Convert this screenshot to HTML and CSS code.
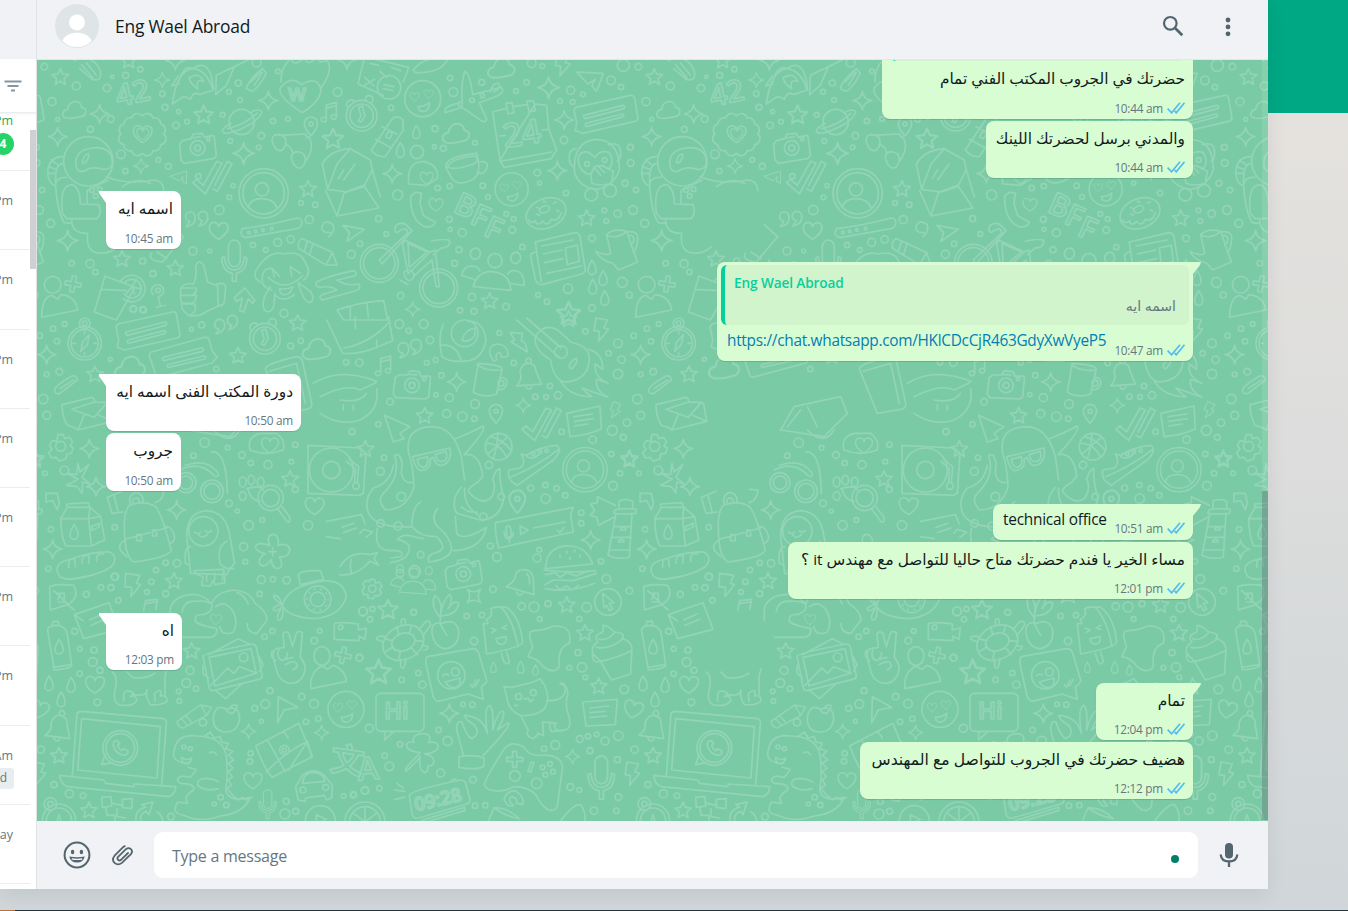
FILE: index.html
```
<!DOCTYPE html>
<html lang="en">
<head>
    <meta charset="UTF-8">
    <meta name="viewport" content="width=device-width, initial-scale=1.0">
    <title>WhatsApp</title>
    <link rel="stylesheet" href="styles.css">
</head>
<body>
    <!-- shared icons -->
    <svg class="defs" width="0" height="0">
        <symbol id="ticks" viewBox="0 0 18 12"><path d="M.6 6.600l4 4.200L13 .8M7.600 9l1.600 1.800L17.500.8" fill="none" stroke="#53bdeb" stroke-width="1.700"/></symbol>
    </svg>
    <div class="app">
        <aside class="side">
            <div class="side-head"></div>
            <div class="side-search">
                <svg width="18" height="12" viewBox="0 0 18 12"><path d="M.5 1.5h17M3.5 6h11M7 10.5h4" stroke="#8696a0" stroke-width="1.9"/></svg>
            </div>
            <ul class="list">
                <li class="unread"><span>Pm</span><b>4</b></li>
                <li><span>Pm</span></li>
                <li><span>Pm</span></li>
                <li><span>Pm</span></li>
                <li><span>Pm</span></li>
                <li><span>Pm</span></li>
                <li><span>Pm</span></li>
                <li><span>Pm</span></li>
                <li><span>Am</span><i>d</i></li>
                <li><span>ay</span></li>
            </ul>
            <div class="side-thumb"></div>
        </aside>
        <main class="chat">
            <header class="chat-head">
                <svg width="44" height="44" viewBox="0 0 44 44">
                    <circle cx="22" cy="22" r="22" fill="#dfe5e7"/>
                    <circle cx="22" cy="18.4" r="8" fill="#fff"/>
                    <path d="M7.4 36.5C10 31 16 28.700 22 28.700s12 2.300 14.600 7.800C33 41 27.500 43 22 43S11 41 7.400 36.500z" fill="#fff"/>
                </svg>
                <h1>Eng Wael Abroad</h1>
                <svg class="find" width="22" height="22" viewBox="0 0 22 22"><circle cx="8.300" cy="8.300" r="6.300" fill="none" stroke="#54656f" stroke-width="2.200"/><path d="M13 13l7.300 7.300" stroke="#54656f" stroke-width="2.700"/></svg>
                <svg class="more" width="6" height="20" viewBox="0 0 6 20"><g fill="#54656f"><circle cx="3" cy="3" r="2.400"/><circle cx="3" cy="9.900" r="2.400"/><circle cx="3" cy="16.800" r="2.400"/></g></svg>
            </header>
            <section class="messages">
                <svg class="wallpaper" width="1231" height="761">
                    <defs>
                        <path id="star" d="M0-26L7-10 25-8 11 4 15 21 0 12-15 21-11 4-25-8-7-10z"/>
                        <path id="spark" d="M0-28Q3-5 28 0Q3 5 0 28Q-3 5-28 0Q-3-5 0-28z"/>
                        <path id="heart" d="M0 26C-42 2-30-30-10-24Q-2-22 0-12Q4-24 14-24C36-22 34 4 0 26z"/>
                        <path id="drop" d="M0-22Q14-2 12 10A12 12 0 0 1-12 10Q-12-2 0-22z"/>
                        <path id="cloud" d="M-26 26C-42 18-34 2-20 0C-16-30 20-30 22-6C42-4 36 22 18 22Q-8 30-26 26z"/>
                        <path id="bolt" d="M-16-34L18-28 8-4 22 0-8 36-6 6-22 4z"/>
                        <path id="plane" d="M-40-30L40-26 20 28 6 12 16-8-6 6z"/>
                        <path id="pin" d="M0 28Q-20 4-20-8A20 20 0 0 1 20-10Q18 8 0 28zM-6-8a6 6 0 1 0 12 0a6 6 0 1 0-12 0"/>
                        <path id="tick" d="M-58 16l12-10 20 18 40-72 16 6-50 92zM2 34l14 8 44-82-14-8-38 72"/>
                        <path id="note" d="M-12 24V-20L18-28V16M-12-10L18-18M-12 24a8 7 0 1 1-4-6M18 16a8 7 0 1 1-4-6"/>
                        <path id="plus" d="M-6-24H6V-6H24V6H6V24H-6V6H-24V-6H-6z"/>
                        <path id="mic" d="M-18-30a18 20 0 0 1 36 0V10a18 20 0 0 1-36 0zM-38 4l8-4q4 40 30 40t30-40l8 4q-2 40-32 46v24h-12v-24q-30-6-32-46z"/>
                        <path id="bell" d="M-40 24Q-16 6-22-12Q-14-38 6-36Q30-30 26-8L34 34zM-14 32q8 16 18 4M4-38a8 8 0 1 1 12 2"/>
                        <path id="pencil" d="M-62-8L38 4 62 36 30 46-62 24Q-74 6-62-8zM-44-6V28M-26-4V32M38 4L30 46"/>
                        <path id="glasses" d="M-60-20q0-20 22-18t20 26q-6 24-20 22t-22-30zM-2 32q0-20 22-18t20 26q-6 24-20 22t-22-30zM-20-10Q2 0 2 20M-38-36L40-40 46-28M42 40Q70 0 50-32"/>
                        <g id="user"><circle r="74"/><circle r="62"/><circle cx="-5" cy="-12" r="20"/><path d="M-46 42Q-40 16-6 16T40 42"/></g>
                        <g id="camera"><path d="M-46-22L-20-28-14-42 14-44 20-32 44-38Q50-38 50-30L56 22Q54 30 46 32L-40 46-50 36-54-12z"/><circle r="22"/><circle r="9"/><path d="M-16-30l24-4"/><circle cx="32" cy="-26" r="5"/></g>
                        <g id="clock"><circle r="46"/><circle r="35"/><path d="M-10-26l8 26-8 16 8 4 12-20-8-28zM-42-26q-8-10 2-18t20 2M12-46q-2-16 12-14t8 20"/></g>
                        <g id="smile"><circle r="54"/><use href="#heart" transform="translate(-24 -6) scale(.5)"/><use href="#heart" transform="translate(18 -14) scale(.5)"/><path d="M-14 24q20 0 34-12q0 24-16 26t-18-14z"/></g>
                        <g id="sheet"><path d="M-86-28L78-64Q88-66 90-54L100 4Q100 12 90 14L-66 50-88 42-84 18-92-20z"/><path d="M-62-4L54-34q10 2 4 10L-58 6q-8-4-4-10zM-56 20L52-8q8 2 4 8L-54 30q-8-4-2-10z"/></g>
                        <g id="people"><circle cy="-46" r="20"/><path d="M-54 34Q-46-14 0-14T54 34zM-58-44a14 16 0 1 1 .1 0M58-44a14 16 0 1 1 .1 0M-54 14L-90 6Q-88-24-60-24Q-46-24-40-12M54 14L90 16Q88-22 60-24Q46-24 40-12" /></g>
                        <g id="mail"><path d="M-76-26L14-48Q22-46 22-34L62-32Q68-30 68-22L76 24-28 50-36 44-60 36Q-76 10-76-26zM-46-12L20 12 60-32M-46-12L22-34M-28 50L-10 6M76 24L34 6"/></g>
                        <g id="compass"><circle r="50"/><circle r="41"/><circle cy="-60" r="16"/><circle cy="-60" r="7"/><path d="M14-26L-6-4-12 24 8 4zM0-36v8M0 28v8M-36 0h8M28 0h8"/></g>
                        <g id="doodle" fill="none" stroke="#93d4b6" stroke-width="5" stroke-linejoin="round" stroke-linecap="round">
                            <g transform="scale(.3333)">
                                <use href="#star" x="70" y="52"/><use href="#star" x="275" y="2"/><use href="#star" transform="translate(500 166) scale(1.15)"/><use href="#star" transform="translate(888 238) scale(1.25)"/><use href="#star" x="813" y="388"/><use href="#star" x="255" y="598"/><use href="#star" x="415" y="626"/>
                                <use href="#spark" transform="translate(376 60) scale(.8)"/><use href="#spark" x="188" y="162"/><use href="#spark" x="415" y="2"/><use href="#spark" x="694" y="122"/><use href="#spark" x="62" y="230"/><use href="#spark" transform="translate(312 318) scale(.8)"/><use href="#spark" transform="translate(620 280) scale(1.15)"/><use href="#spark" transform="translate(92 542) scale(1.1)"/><use href="#spark" x="930" y="0"/>
                                <text x="243" y="140" font-size="90" transform="rotate(-12 243 140)">42</text>
                                <path d="M112 2Q170-20 190 34Q196 66 166 58L128 26M134 14l34 40M148 8l30 38"/>
                                <path d="M406 132Q420 30 468 26Q510 30 528 90Q500 100 488 104Q470 92 460 118Q440 104 430 116zM468 26Q440 10 424 68M468 26Q520-10 530 88M456 54q30-20 44 10-26-8-18 22-20-12-26-32M426 72l-22 6 20-30M536 104L538 46 592 20 568 76zM592 20l70-34"/>
                                <path d="M628 86Q634 60 676 26L688 40Q668 80 646 94zM642 66l30-30M652 76l24-38"/>
                                <path d="M732 66Q730 20 764-6Q766 26 806-10Q804 26 846-12Q842 16 870 0Q892 30 850 86M796 158Q720 110 730 84Q760 44 794 74Q840 46 852 88Q850 124 796 158z"/>
                                <text x="754" y="122" font-size="56">W</text>
                                <use href="#cloud" x="112" y="148"/>
                                <path transform="translate(316 222)" d="M64 0A18 18 0 0 1 55 32A18 18 0 0 1 32 50A18 18 0 0 1 0 58A18 18 0 0 1-32 50A18 18 0 0 1-55 32A18 18 0 0 1-64 0A18 18 0 0 1-55-30A18 18 0 0 1-32-48A18 18 0 0 1 0-54A18 18 0 0 1 32-48A18 18 0 0 1 55-30A18 18 0 0 1 64 0z"/>
                                <use href="#heart" x="317" y="222"/><use href="#heart" transform="translate(317 222) scale(.65)"/>
                                <use href="#camera" x="482" y="264"/>
                                <circle cx="614" cy="186" r="38"/><path d="M582 190Q540 214 566 220Q590 220 648 188Q690 152 664 150Q648 150 640 160M572 206Q620 196 660 160"/>
                                <use href="#plane" transform="translate(430 358) rotate(-20) scale(.65)"/>
                                <use href="#tick" x="525" y="352"/>
                                <use href="#user" x="680" y="400"/>
                                <use href="#glasses" x="765" y="262"/>
                                <use href="#pin" x="822" y="200"/><use href="#note" x="880" y="155"/><use href="#clock" x="974" y="167"/>
                                <!-- open letter -->
                                <path d="M872 388L900 312 940 266 1000 300 1006 330 980 380 930 396zM872 388L856 312Q880 270 940 266M900 468L866 392M900 468L922 398 980 376 1026 444zM1006 330L1030 410M904 356l16-26M920 360l34-48"/>
                                <!-- astronaut -->
                                <circle cx="154" cy="304" r="74"/><path d="M118 322Q110 280 148 268Q200 252 222 284Q236 330 200 328Q160 318 146 332Q124 340 118 322zM136 306Q140 284 154 282Q160 284 148 304Q138 314 136 306M78 290Q34 290 32 340Q34 370 56 378M78 310Q52 312 56 376M34 320l22 8M34 340h20M44 300l18 14M90 352Q54 350 56 380Q62 460 82 488L104 490M76 460Q66 372 108 374Q130 386 130 432L186 434Q196 460 180 476H90zM104 480Q104 520 152 520Q146 570 178 578Q220 584 240 560M208 350Q270 376 350 360Q380 362 380 392M214 360L150 392V430"/>
                                <circle cx="165" cy="390" r="7"/><circle cx="188" cy="388" r="7"/><circle cx="176" cy="408" r="7"/>
                                <path d="M343 580Q330 600 376 606L440 530 400 494M360 576l30 20M256 380Q300 350 340 370"/>
                                <path d="M616 506Q700 496 780 474Q796 474 794 490Q794 502 780 506L632 532Q614 534 612 518zM448 500q30-6 26-30a14 14 0 1 0-16 14zM486 498q30-6 26-30a14 14 0 1 0-16 14z"/>
                                <circle cx="636" cy="518" r="4"/><circle cx="656" cy="514" r="4"/><circle cx="678" cy="510" r="4"/><circle cx="704" cy="506" r="4"/>
                                <use href="#heart" x="545" y="512"/>
                                <path d="M880 518Q850 520 856 496Q868 476 888 494Q896 514 876 530M918 496L982 508 930 544 938 518z"/>
                                <use href="#pencil" transform="translate(852 562) rotate(18)"/>
                                <use href="#mic" x="592" y="590"/>
                                <path d="M432 684Q440 668 470 672Q480 650 476 620Q484 594 500 616L512 666 542 678 544 738 506 756Q486 772 454 766L436 748 430 708zM436 684h42q0 22-20 22h-24M434 706h44q0 24-22 24h-18M442 732h32q6 26-16 34M540 672q24-6 26 10l-4 44q-4 14-20 10"/>
                                <path d="M670 666Q640 650 666 618Q700 570 740 582Q790 570 804 606Q826 640 800 660M676 652Q680 620 706 626L712 650M706 626L728 650M760 620L764 648M760 620L790 640M694 652Q744 700 796 648M728 686Q748 690 768 680Q760 704 744 704T728 686zM700 680Q670 720 682 750Q700 764 710 740L714 700M784 668Q800 730 820 728Q836 718 820 694zM716 706Q740 730 772 704M676 652Q670 680 704 690"/>
                                <path d="M204 648L294 682 238 780 172 756zM192 688L268 692M252 662A40 40 0 1 1 258 716M262 670A28 28 0 1 1 262 702M284 680l14-22M284 680l24 6M284 680l10 22M284 680l-14 20"/>
                                <circle cx="47" cy="674" r="25"/><path d="M14 772Q14 712 44 706L62 718 72 704Q116 708 122 750zM348 704a18 18 0 1 1 16 6l6 28M358 742l26-6M592 714L624 684 654 722 646 730 634 716 620 756 608 752 616 714 598 724z"/>
                                <circle cx="363" cy="691" r="7"/><use href="#plus" transform="translate(108 672) rotate(10)"/>
                                <path d="M838 666Q880 646 950 632Q964 640 952 648L900 660Q930 680 966 672Q974 690 950 694L856 720Q842 712 856 704L900 690Q880 676 850 682Q834 680 838 666zM900 750Q960 728 1040 722L1052 780H920zM940 740v40M990 732l4 40"/>
                                <circle cx="22" cy="20" r="10"/><circle cx="118" cy="78" r="12"/><circle cx="45" cy="125" r="12"/><circle cx="210" cy="84" r="11"/><circle cx="266" cy="46" r="9"/><circle cx="226" cy="50" r="5"/><circle cx="310" cy="28" r="8"/><circle cx="376" cy="101" r="8"/><circle cx="384" cy="142" r="9"/><circle cx="425" cy="155" r="6"/><circle cx="417" cy="196" r="10"/><circle cx="450" cy="185" r="7"/><circle cx="160" cy="208" r="9"/><circle cx="221" cy="177" r="10"/><circle cx="62" cy="178" r="6"/><circle cx="557" cy="164" r="7"/><circle cx="604" cy="69" r="9"/><circle cx="576" cy="95" r="7"/><circle cx="609" cy="120" r="7"/><circle cx="659" cy="8" r="13"/><circle cx="723" cy="34" r="7"/><circle cx="902" cy="96" r="13"/><circle cx="708" cy="183" r="8"/><circle cx="753" cy="177" r="7"/><circle cx="673" cy="227" r="10"/><circle cx="665" cy="262" r="7"/><circle cx="580" cy="243" r="7"/><circle cx="252" cy="283" r="13"/><circle cx="394" cy="319" r="9"/><circle cx="364" cy="300" r="7"/><circle cx="484" cy="349" r="8"/><circle cx="588" cy="377" r="6"/><circle cx="547" cy="450" r="14"/><circle cx="577" cy="412" r="7"/><circle cx="468" cy="573" r="12"/><circle cx="518" cy="573" r="6"/><circle cx="817" cy="479" r="12"/><circle cx="835" cy="434" r="8"/><circle cx="792" cy="429" r="7"/><circle cx="722" cy="547" r="12"/><circle cx="761" cy="538" r="11"/><circle cx="686" cy="570" r="7"/><circle cx="648" cy="555" r="8"/><circle cx="41" cy="490" r="12"/><circle cx="159" cy="611" r="12"/><circle cx="104" cy="610" r="8"/><circle cx="317" cy="603" r="9"/><circle cx="348" cy="641" r="9"/><circle cx="175" cy="636" r="8"/><circle cx="289" cy="747" r="10"/><circle cx="317" cy="749" r="9"/><circle cx="15" cy="390" r="8"/><circle cx="6" cy="450" r="13"/><circle cx="265" cy="333" r="8"/>
                            </g>
                            <g transform="translate(303 0) scale(.3333)">
                                <path d="M74-10L54 72 130 106M74-10L206 22 190 66M154 22l28 10"/><circle cx="147" cy="82" r="35"/><path d="M132 74l30 6M130 86l28 6M74 52l28 26M74 76l30-18M90 10l26 6M120 34l20 18M220 30Q250-10 326-10Q310 40 226 38z"/>
                                <use href="#smile" x="248" y="116"/><use href="#smile" transform="translate(515 388) scale(.92)"/>
                                <path d="M374 34Q390 40 398 104L484 82Q496 94 476 106L418 128 440 178Q436 190 424 182L366 142 316 158Q310 142 340 134L366 126Q364 60 374 34zM452 96q4-28 24-26 6 16-14 26"/>
                                <circle cx="396" cy="121" r="7"/><circle cx="427" cy="107" r="6"/><circle cx="361" cy="132" r="6"/>
                                <use href="#cloud" transform="translate(348 218) scale(1.15)"/><use href="#cloud" transform="translate(484 22) scale(1.15)"/>
                                <path d="M458 156L496 146M520 140L560 134M586 132L620 136 626 206 650 270 634 296 492 322 480 300zM480 304L636 276M478 228L496 226M606 210L622 208M498 130l18-2 6 30-18 4zM560 124l20-2 6 30-18 4zM458 156L480 300"/>
                                <text x="494" y="264" font-size="100" transform="rotate(-9 494 264)">24</text>
                                <path d="M94 270L150 186Q164 160 188 178L190 210 136 290Q110 292 94 270zM106 238l44 24M126 200l44 22M138 232q4-20 14-16t-4 20z"/>
                                <circle cx="231" cy="276" r="20"/><path d="M206 372Q200 304 252 304Q298 316 292 356L260 376z"/><use href="#heart" transform="translate(260 354) scale(.7)"/>
                                <path d="M318 324Q310 290 410 280Q430 350 390 362Q350 380 334 352zM322 322Q330 296 404 288Q426 304 390 316Q350 330 322 322M418 306Q444 300 442 322Q434 346 412 338"/>
                                <path d="M228 396L244 400 240 430 250 466 266 476 286 486Q280 504 254 500Q210 480 212 408z"/><use href="#heart" transform="translate(288 434) scale(.75)"/>
                                <g font-size="92"><text x="336" y="454" transform="rotate(24 336 454)">B</text><text x="386" y="488" transform="rotate(24 386 488)">F</text><text x="426" y="524" transform="rotate(24 426 524)">F</text></g>
                                <ellipse cx="618" cy="460" rx="62" ry="44" transform="rotate(-22 618 460)"/><ellipse cx="614" cy="448" rx="16" ry="10" transform="rotate(-22 614 448)"/><path d="M566 480q8 14 20 2 6 20 22 2 14 18 26-6 20 10 30-20M590 442l8 4M640 430l8-4M610 424l8 2M650 450l6 4M590 462l8 4"/>
                                <!-- monkey -->
                                <path d="M704 340Q696 244 768 238Q840 240 838 330Q820 380 770 388Q720 384 704 340zM708 266Q684 270 688 300Q690 316 702 320M806 254Q840 244 842 276Q842 300 832 304M716 310Q710 272 744 276L766 292Q780 268 808 278Q826 308 806 328L790 318M752 344L764 320Q784 310 820 334L814 370Q780 380 756 370zM766 326l16 20M776 320l18 18M716 310Q724 340 752 344"/>
                                <circle cx="741" cy="312" r="7"/><circle cx="794" cy="300" r="7"/><circle cx="754" cy="404" r="19"/><circle cx="810" cy="392" r="19"/>
                                <use href="#sheet" x="794" y="170"/><use href="#bolt" x="668" y="12"/><use href="#plane" x="750" y="66"/>
                                <!-- bicycle -->
                                <circle cx="118" cy="610" r="57"/><circle cx="118" cy="610" r="47"/><circle cx="296" cy="684" r="57"/><circle cx="296" cy="684" r="47"/>
                                <path d="M118 600L204 518Q200 500 180 512Q166 524 164 508Q168 484 196 492L216 512 126 612zM188 552L204 642 270 576 194 540zM204 550L208 622 262 576zM270 576L286 570 298 680H288L276 600 220 650M274 544Q300 536 328 540Q334 562 304 564L280 584M192 636q20-14 28 4t-14 22q-14-8-14-26zM180 660l24 14"/>
                                <use href="#people" transform="translate(460 650) rotate(6) scale(1.05)"/>
                                <path d="M586 546L704 518Q718 518 720 530L736 630Q734 640 724 642L606 674Q590 674 586 656L572 590Q570 578 590 576zM590 576L604 664M606 558l94-18M610 582l56-12M614 608l54-12M620 640l106-22M676 564l36-8 6 48-36 10z"/>
                                <path d="M800 524Q820 504 860 514L892 606 836 630 818 610Q780 600 768 574Q800 590 812 580zM800 526Q830 538 858 516M860 516Q900 510 892 546Q890 570 880 576M868 526Q886 526 880 546L872 556"/>
                                <use href="#spark" transform="translate(157 341)"/><use href="#spark" transform="translate(626 83) scale(1.15)"/><use href="#spark" x="673" y="180"/><use href="#spark" x="652" y="332"/><use href="#spark" transform="translate(218 748) scale(.8)"/>
                                <use href="#star" x="740" y="476"/><use href="#star" x="449" y="724"/><use href="#star" transform="translate(686 762) scale(1.4)"/>
                                <use href="#drop" transform="translate(229 216) scale(.9)"/><use href="#drop" x="181" y="270"/><use href="#drop" x="756" y="622"/><use href="#drop" x="789" y="654"/><use href="#drop" x="758" y="680"/><use href="#drop" x="794" y="714"/>
                                <circle cx="340" cy="96" r="13"/><circle cx="425" cy="67" r="9"/><circle cx="330" cy="54" r="8"/><circle cx="153" cy="143" r="8"/><circle cx="285" cy="206" r="9"/><circle cx="405" cy="248" r="7"/><circle cx="310" cy="265" r="9"/><circle cx="283" cy="260" r="6"/><circle cx="560" cy="67" r="8"/><circle cx="575" cy="9" r="13"/><circle cx="607" cy="18" r="7"/><circle cx="528" cy="93" r="7"/><circle cx="692" cy="91" r="12"/><circle cx="729" cy="103" r="7"/><circle cx="813" cy="61" r="13"/><circle cx="850" cy="16" r="18"/><circle cx="843" cy="81" r="8"/><circle cx="660" cy="123" r="7"/><circle cx="698" cy="126" r="7"/><circle cx="672" cy="240" r="11"/><circle cx="592" cy="338" r="10"/><circle cx="599" cy="369" r="6"/><circle cx="678" cy="399" r="8"/><circle cx="173" cy="405" r="15"/><circle cx="293" cy="384" r="8"/><circle cx="329" cy="378" r="8"/><circle cx="428" cy="377" r="8"/><circle cx="444" cy="411" r="7"/><circle cx="328" cy="478" r="9"/><circle cx="367" cy="518" r="12"/><circle cx="330" cy="508" r="6"/><circle cx="517" cy="510" r="10"/><circle cx="499" cy="462" r="7"/><circle cx="521" cy="477" r="7"/><circle cx="547" cy="561" r="8"/><circle cx="116" cy="476" r="9"/><circle cx="139" cy="522" r="7"/><circle cx="793" cy="451" r="7"/><circle cx="833" cy="461" r="11"/><circle cx="799" cy="483" r="7"/><circle cx="756" cy="535" r="10"/><circle cx="855" cy="370" r="9"/><circle cx="872" cy="309" r="10"/><circle cx="871" cy="262" r="9"/><circle cx="357" cy="569" r="9"/><circle cx="344" cy="610" r="9"/><circle cx="396" cy="711" r="11"/><circle cx="402" cy="754" r="9"/><circle cx="360" cy="751" r="8"/><circle cx="498" cy="740" r="10"/><circle cx="684" cy="686" r="14"/><circle cx="594" cy="705" r="7"/><circle cx="621" cy="725" r="8"/><circle cx="756" cy="744" r="10"/><circle cx="847" cy="667" r="15"/><circle cx="868" cy="705" r="9"/><circle cx="182" cy="707" r="10"/><circle cx="34" cy="583" r="12"/><circle cx="60" cy="551" r="8"/>
                            </g>
                            <g transform="translate(-37 220) scale(.3333)">
                                <use href="#compass" x="254" y="190"/><use href="#sheet" x="440" y="160"/><use href="#sheet" transform="translate(554 236) scale(-1 1) rotate(28)"/>
                                <use href="#clock" x="795" y="176"/><use href="#cloud" transform="translate(390 260) scale(1.3)"/><use href="#cloud" transform="translate(950 205) scale(1.2)"/>
                                <path d="M648 162q28-8 26-28a15 15 0 1 0-16 14zM686 150q28-8 26-28a15 15 0 1 0-16 14zM796 266Q800 250 890 230Q904 230 908 246L936 374Q934 386 920 388L850 400zM808 274L890 250 916 370M164 330Q166 316 216 288Q232 286 232 300L180 340Q164 344 164 330zM180 326L220 300"/>
                                <use href="#mail" x="262" y="400"/>
                                <use href="#star" x="714" y="228"/><use href="#star" x="893" y="130"/><use href="#star" x="285" y="284"/><use href="#star" x="870" y="598"/><use href="#spark" x="140" y="224"/><use href="#spark" x="268" y="506"/><use href="#spark" x="288" y="620"/><use href="#spark" x="530" y="690"/><use href="#spark" x="158" y="808"/><use href="#star" x="106" y="540"/>
                                <circle cx="182" cy="499" r="15"/><path d="M174 464h16l4 12 14-4 10 14-8 12 10 6-6 16-14 2-2 14-20 8-10-12-14 2-8-16 10-10-8-12 8-14 14 2z"/>
                                <path d="M234 550l-4 34-30-4 34 18-34 18 32 4 14 20 2-34 22 6-24-20 20-38-26 22zM138 640l34 0 6 30-6 20-14-28-20 4z"/>
                                <!-- milk carton, bread, backpack -->
                                <path d="M182 716L202 682 200 672 264 668 270 682 302 710 314 780 274 798 198 798Q184 776 182 716zM182 716H266L302 710M266 716L274 798M202 682H268M266 716L270 682M274 740l24-10v10l-22 12z"/><use href="#drop" x="222" y="756"/>
                                <path d="M174 880Q160 850 210 838Q280 814 330 816Q356 832 336 858Q300 886 210 898Q178 898 174 880zM206 862Q204 830 224 838L226 860M246 850Q246 820 268 828L266 850M290 844Q288 816 310 822"/>
                                <path d="M376 790Q366 700 388 676Q430 660 460 676Q480 680 514 812Q500 834 400 846Q380 830 376 790zM376 778L500 744M392 674a20 24 0 1 1 36-4M398 668a10 12 0 1 1 20-4M410 764h14v18h-14zM458 750h12v18h-12zM376 780Q352 790 362 812L380 830M492 740Q516 736 524 770Q524 788 508 790M322 652L366 634M322 652L336 700 370 696M466 628L492 630Q490 660 466 668M342 646l12 48"/>
                                <path d="M540 570Q600 540 644 588M556 556Q620 534 652 576Q660 590 648 590M634 516Q680 510 682 640"/><circle cx="558" cy="608" r="30"/><circle cx="558" cy="608" r="20"/><circle cx="636" cy="634" r="34"/><circle cx="636" cy="634" r="24"/>
                                <path d="M572 880L560 770Q560 696 620 692Q680 696 690 770L704 850 690 866 680 884zM572 800Q552 800 556 850L570 856M680 784Q650 800 660 850Q674 870 700 866M584 756q8 10 18 0M616 752q8 10 18 0M596 764q10 14 26 0M620 884v20M644 880v20M668 880v20"/><circle cx="610" cy="754" r="44"/>
                                <circle cx="812" cy="654" r="38"/><circle cx="812" cy="654" r="26"/><path d="M834 688L860 724Q872 732 870 712L846 680M740 626Q780 614 790 630M744 626Q750 660 780 664"/><ellipse cx="728" cy="606" rx="10" ry="15"/><ellipse cx="754" cy="600" rx="10" ry="14"/><ellipse cx="782" cy="606" rx="10" ry="14"/><ellipse cx="728" cy="648" rx="10" ry="13"/>
                                <path transform="translate(818 815)" d="M-8-18C-30-60 26-66 16-18C60-36 64 20 20 16C44 54-2 66-4 24C-30 66-60 26-22 6C-70-4-54-38-8-18zM0-12V12M-12 0H12"/>
                                <path d="M750 510Q740 470 780 460H830Q858 480 850 510Q800 530 750 510zM640 450Q690 500 720 450"/><use href="#heart" transform="translate(810 496) scale(.9)"/>
                                <path d="M560 450L600 380 740 350 760 400 690 470zM580 440l40-50M640 380l30 60"/>
                                <use href="#heart" x="944" y="678"/>
                                <circle cx="119" cy="167" r="8"/><circle cx="159" cy="146" r="8"/><circle cx="194" cy="132" r="7"/><circle cx="171" cy="184" r="8"/><circle cx="178" cy="275" r="10"/><circle cx="140" cy="283" r="7"/><circle cx="130" cy="357" r="14"/><circle cx="140" cy="406" r="12"/><circle cx="193" cy="571" r="13"/><circle cx="135" cy="580" r="7"/><circle cx="400" cy="87" r="9"/><circle cx="430" cy="90" r="9"/><circle cx="605" cy="135" r="9"/><circle cx="574" cy="148" r="6"/><circle cx="331" cy="238" r="6"/><circle cx="649" cy="267" r="8"/><circle cx="872" cy="198" r="9"/><circle cx="902" cy="182" r="8"/><circle cx="852" cy="100" r="12"/><circle cx="614" cy="488" r="14"/><circle cx="580" cy="527" r="8"/><circle cx="683" cy="503" r="7"/><circle cx="726" cy="525" r="10"/><circle cx="804" cy="554" r="12"/><circle cx="752" cy="549" r="8"/><circle cx="874" cy="545" r="7"/><circle cx="886" cy="494" r="8"/><circle cx="687" cy="670" r="10"/><circle cx="712" cy="693" r="6"/><circle cx="746" cy="736" r="14"/><circle cx="731" cy="800" r="12"/><circle cx="736" cy="845" r="7"/><circle cx="787" cy="720" r="7"/><circle cx="924" cy="736" r="14"/><circle cx="886" cy="628" r="9"/><circle cx="153" cy="748" r="8"/><circle cx="344" cy="742" r="8"/><circle cx="145" cy="866" r="8"/><circle cx="344" cy="890" r="10"/><circle cx="497" cy="848" r="8"/><circle cx="531" cy="850" r="11"/><circle cx="468" cy="870" r="8"/>
                            </g>
                            <g transform="translate(303 260) scale(.3333)">
                                <path d="M-40 0L8 100Q60 104 110 82L158 62 146-10M12 84Q90 70 146 8M46-10v36M110 60v24M180 114q28-8 26-28a16 16 0 1 0-16 14zM218 104q28-8 26-28a16 16 0 1 0-16 14z"/>
                                <use href="#note" x="134" y="136"/><use href="#camera" transform="translate(216 196) rotate(12)"/>
                                <path d="M310 12Q292 50 306 110Q330 130 390 122Q430 110 438 60Q430 0 384 4M302 76Q350 70 364 124"/><circle cx="374" cy="40" r="40"/><path d="M366 60Q374 30 404 24Q414 56 376 64z"/>
                                <path d="M452 108Q440 76 474 72Q506 76 504 108Q480 118 482 100Q470 94 468 110Q474 124 460 122zM510 38L548 40 544 62 556 70 562 96 514 66 524 60z"/>
                                <path d="M414 136L400 216Q430 236 470 222L486 150M412 134Q440 156 486 150Q490 134 414 130M480 172Q504 172 500 192Q494 212 474 208"/><circle cx="483" cy="190" r="9"/>
                                <use href="#bell" transform="translate(564 166) rotate(-12)"/>
                                <path d="M530 0L660 114M560-6L664 84M586 50Q610 10 650 28Q690 60 690 66Q760 80 746 130Q740 180 676 186Q640 180 632 120Q580 90 586 50zM688 136q10-20 22-20 4 12-14 30-10 0-8-10M746 88Q790 100 788 148L766 132Q760 170 804 190L770 178Q764 210 804 232L726 204Q738 220 756 230Q690 230 662 184"/><circle cx="663" cy="96" r="19"/>
                                <use href="#bolt" x="784" y="28"/><use href="#bolt" transform="translate(826 270) rotate(14) scale(.7)"/><use href="#spark" x="350" y="186"/><use href="#spark" transform="translate(550 256) scale(.8)"/><use href="#pin" x="468" y="282"/><use href="#pin" transform="translate(532 546) scale(1.2)"/>
                                <use href="#tick" x="604" y="312"/>
                                <path d="M680 280L780 258 784 326Q750 344 690 350zM702 290l56-8M704 304l56-8M704 318l40-6M134 286L210 320 180 340 192 356 160 366z"/>
                                <circle cx="476" cy="380" r="40"/><path d="M440 370Q480 370 500 412M452 350Q490 360 512 390M474 340Q470 390 460 416M502 352Q480 370 444 402"/>
                                <!-- shoe -->
                                <path d="M506 450L540 444Q560 430 544 402L560 406Q600 380 650 376Q670 390 640 420L532 496Q500 480 506 450zM514 470Q590 440 656 388M560 410q20 10 36-6"/><circle cx="580" cy="402" r="5"/><circle cx="600" cy="396" r="5"/><circle cx="620" cy="392" r="5"/>
                                <use href="#user" transform="translate(735 449) scale(.9)"/>
                                <!-- octopus with shades -->
                                <path d="M222 500Q220 440 206 400Q194 322 276 320Q340 320 364 410L374 480M222 500Q200 570 136 570Q110 540 130 520Q184 470 164 406Q180 396 186 430L184 460Q190 490 216 488M160 436Q150 490 100 504Q70 540 86 580Q110 626 216 620M242 546Q216 560 216 620Q240 650 290 650Q330 690 280 700Q260 710 266 726Q340 716 334 680Q330 654 300 626Q268 600 292 566M112 626Q100 690 150 692Q196 690 184 710L152 714M152 728Q210 720 208 680Q200 664 172 658Q190 640 220 650L250 656M342 358Q390 340 430 318Q440 330 376 400M372 404Q420 396 428 470L414 486Q374 510 390 520Q430 560 456 530Q470 500 458 478Q468 446 480 446Q476 480 492 534Q480 600 420 600L350 580Q330 540 364 502M346 590L350 640Q370 666 440 622Q424 690 340 692M364 560Q384 580 412 576M374 504Q370 560 414 584"/>
                                <path d="M218 410L330 384Q336 420 316 432Q290 446 280 412L270 418Q276 450 240 452Q224 442 218 410zM232 418l30-8q6 30-14 32-14-4-16-24zM286 404l32-10q8 26-10 30-18 4-22-20z"/>
                                <circle cx="184" cy="530" r="13"/><circle cx="174" cy="618" r="12"/><circle cx="122" cy="610" r="11"/><circle cx="430" cy="590" r="11"/><circle cx="484" cy="530" r="10"/>
                                <!-- record player -->
                                <path d="M-96 376L60 384 78 400 70 520 60 526-96 520zM20 424L46 446 44 486M28 418L56 440 52 486"/><circle cx="-26" cy="450" r="66"/><circle cx="-26" cy="450" r="26"/><circle cx="48" cy="498" r="10"/><use href="#star" x="76" y="388"/>
                                <path d="M-80 190Q0 140 110 184Q108 190 60 210Q20 190-60 230M110 206Q120 270 60 300Q0 320-60 280M0 240Q60 250 80 220M10 254v16M40 256v14"/>
                                <path d="M466 608L700 562 692 584 700 636 476 684Q466 650 466 608zM498 624q8-14 14 0l2 22q-8 12-14-2zM492 636q4 24 16 20t12-20M508 658v10M540 618l24 12-22 14zM580 624l96-18M652 630l8 8 12-16"/>
                                <!-- lighthouse -->
                                <path d="M828 580L804 706Q830 720 868 712L876 580M824 570Q850 564 888 568V580Q850 584 822 580zM836 566L838 542Q860 534 878 544V566M820 620h52M816 652h58M810 690h58M826 556L772 530V548L752 552 764 572 750 586 770 592 776 616 822 592M842 630a8 8 0 0 1 16 0zM836 666a8 8 0 0 1 16 0z"/>
                                <path d="M616 746L622 714Q640 676 690 678Q740 680 758 732zM612 750Q700 760 768 752M616 764l30-6 14 14 20-14 30 10 30-14M680 694v6M704 690v6M660 706v6M720 704v6M690 712v6"/>
                                <path d="M-40 604L64 584 76 612M-40 650L0 656M6 622l36-12M10 638l40-14M60 640l10-12 28 8-20 16M0 740Q30 690 90 704L112 698 102 716 116 736 90 724Q50 770 0 764M34 718q-6 20 0 40"/>
                                <use href="#camera" transform="translate(370 762) rotate(-2)"/>
                                <use href="#spark" transform="translate(752 660)"/><use href="#star" x="254" y="288"/><use href="#star" x="686" y="-2"/><use href="#star" x="868" y="416"/>
                                <circle cx="178" cy="12" r="13"/><circle cx="251" cy="12" r="13"/><circle cx="206" cy="32" r="8"/><circle cx="270" cy="60" r="11"/><circle cx="58" cy="128" r="11"/><circle cx="18" cy="127" r="8"/><circle cx="260" cy="128" r="7"/><circle cx="287" cy="120" r="7"/><circle cx="304" cy="166" r="8"/><circle cx="288" cy="224" r="6"/><circle cx="328" cy="233" r="12"/><circle cx="405" cy="252" r="13"/><circle cx="320" cy="281" r="12"/><circle cx="367" cy="290" r="14"/><circle cx="403" cy="296" r="8"/><circle cx="150" cy="245" r="10"/><circle cx="478" cy="39" r="7"/><circle cx="521" cy="129" r="8"/><circle cx="630" cy="198" r="8"/><circle cx="654" cy="226" r="11"/><circle cx="586" cy="230" r="8"/><circle cx="618" cy="231" r="7"/><circle cx="834" cy="70" r="13"/><circle cx="845" cy="119" r="11"/><circle cx="834" cy="162" r="14"/><circle cx="806" cy="100" r="8"/><circle cx="736" cy="34" r="8"/><circle cx="665" cy="335" r="8"/><circle cx="758" cy="359" r="11"/><circle cx="817" cy="331" r="15"/><circle cx="861" cy="308" r="11"/><circle cx="850" cy="352" r="9"/><circle cx="447" cy="435" r="11"/><circle cx="121" cy="454" r="12"/><circle cx="132" cy="413" r="8"/><circle cx="572" cy="504" r="9"/><circle cx="616" cy="495" r="8"/><circle cx="650" cy="505" r="8"/><circle cx="617" cy="536" r="14"/><circle cx="676" cy="526" r="8"/><circle cx="814" cy="402" r="8"/><circle cx="840" cy="460" r="8"/><circle cx="819" cy="497" r="13"/><circle cx="724" cy="578" r="8"/><circle cx="724" cy="610" r="8"/><circle cx="451" cy="678" r="9"/><circle cx="471" cy="711" r="13"/><circle cx="591" cy="714" r="12"/><circle cx="598" cy="689" r="7"/><circle cx="242" cy="704" r="10"/><circle cx="224" cy="754" r="17"/><circle cx="180" cy="760" r="11"/><circle cx="783" cy="724" r="8"/><circle cx="115" cy="313" r="8"/><circle cx="36" cy="335" r="9"/>
                            </g>
                            <g transform="translate(0 510) scale(.3333)">
                                <path d="M38 50Q60 40 110 46Q130 80 92 104L112 120M38 50L40 120 92 104M50 62L94 104M62 88l8-14M60 70h20M82 92V70M64 96h20M112 134L216 98 246 178 140 206zM112 134l26 18M158 150l40-18M162 166l44-18M320 122l6-30 36-4-6 30M326 100l32-4M266 10L308 16 298 40 310 44 282 80 284 52 264 50z"/>
                                <path d="M32 182Q30 166 62 166Q90 170 92 200L104 286Q100 296 52 300zM44 168l4-14h16l2 12M50 292L102 284"/><use href="#drop" x="66" y="230"/>
                                <path d="M400 116Q410 80 458 74Q500 70 524 102Q536 66 590 60Q640 64 654 100Q690 124 690 150L660 190Q630 190 630 160M400 116V150M524 102Q506 90 480 94Q440 90 436 126M524 102Q530 124 500 134Q470 130 476 156Q490 166 540 176Q540 200 520 202H430M536 110Q560 90 584 118Q606 150 590 186Q556 200 548 170M600 68q20 4 34 34"/><use href="#heart" transform="translate(537 148) scale(.6)"/>
                                <!-- submarine -->
                                <path d="M736 106Q750 50 850 34Q920 24 928 80Q910 140 830 146Q750 140 736 106zM784 14Q790 0 850 2L860 28 790 44zM732 104Q704 80 712 76Q728 76 734 104Q704 110 710 120Q716 126 734 112Q716 142 724 150Q738 154 738 116M470 2l90-4 4 40-30 6-4-14-10 18-26-2 4-26-20-8z"/><circle cx="842" cy="88" r="40"/><circle cx="842" cy="88" r="32" stroke-dasharray="2 18"/><circle cx="842" cy="88" r="22"/>
                                <path d="M892 162Q900 154 964 162V180L988 174 984 208 966 198V212L892 208z"/><circle cx="911" cy="172" r="7"/>
                                <path d="M498 258Q500 250 644 222Q656 222 658 232L676 318Q676 326 666 328L528 362Q518 362 516 350zM516 262L642 236 658 310 534 348zM522 346L572 294 590 310 608 290 660 310M514 254L604 206 636 222M536 362L566 386 612 344M498 286V310L514 324M664 256l14 28-10 20"/><circle cx="620" cy="262" r="13"/>
                                <path d="M716 290Q700 240 720 236L742 232 738 192Q744 180 756 190L766 230 778 190Q784 180 796 188L790 262Q806 280 804 300Q796 340 760 340Q724 336 716 290zM706 242q-10 16 10 30M726 238q-10 26 10 34 14-4 16-24M742 268l26-6M744 284q28-16 34-4 10 8-10 20"/>
                                <ellipse cx="855" cy="258" rx="24" ry="28"/><path d="M822 356Q816 310 854 288L872 298 888 286Q926 300 928 334z"/><use href="#plus" transform="translate(918 256) rotate(12)"/>
                                <path d="M226 306Q246 320 232 370Q230 410 264 406Q290 408 300 390Q296 374 280 380L290 370Q264 354 260 374V394M290 374Q330 380 330 360Q324 380 340 404Q370 408 390 394Q392 374 370 378Q380 350 352 370L354 394M384 374V320L390 296M270 306L286 322Q320 330 354 310"/>
                                <use href="#pencil" transform="translate(464 424) rotate(-42) scale(.85)"/>
                                <path d="M568 418Q540 400 530 436Q524 480 562 486Q604 488 608 444Q606 404 568 418zM568 418Q572 430 584 430M582 416Q580 402 600 406Q600 420 586 430M724 380L782 412 742 420 722 458z"/>
                                <!-- laptop -->
                                <path d="M106 616L120 430Q124 424 134 424L380 446Q390 450 388 462L374 644M122 600L134 446 370 470 360 624zM68 616L200 630 206 640 290 650 292 642 416 650Q416 672 396 680L90 650Q70 640 68 616z"/><circle cx="250" cy="534" r="52"/><circle cx="250" cy="534" r="43"/><path d="M204 554L194 584 226 578M240 512Q226 510 230 530Q240 556 264 556Q276 550 272 542L260 536 254 542Q244 536 242 526L248 520z"/>
                                <use href="#bell" transform="translate(64 472)"/>
                                <!-- dinosaur -->
                                <path d="M454 582Q400 576 412 540Q420 490 480 498Q560 500 568 560Q574 620 566 660Q576 700 640 682Q620 730 550 738Q490 760 440 736Q400 730 422 696L452 700Q436 680 470 660Q476 640 430 640Q410 626 436 618L460 622Q480 600 476 598L454 592M544 656Q510 666 484 648Q476 630 500 626Q530 624 544 636M434 562Q450 574 464 564Q460 582 446 580T434 562zM504 498L520 486 532 504L550 500 554 516 574 520 566 536 588 544 574 556 590 570 574 580 588 594 574 606 586 620 574 630 584 646 570 654 582 670 592 680 604 690 616 682 630 690 646 682M518 548q12-6 20 6"/><circle cx="441" cy="531" r="6"/><circle cx="460" cy="536" r="6"/>
                                <path d="M656 528L786 460 826 560 706 622Q684 600 656 528zM694 514l50 90M740 484l14 20M688 606Q740 550 812 514M784 556L812 514 824 562M784 556L756 600"/><circle cx="742" cy="540" r="14"/><circle cx="742" cy="540" r="6"/>
                                <path d="M784 690L776 650 796 616Q830 590 862 616L886 646 884 684 868 690 862 676 806 684 804 694zM796 640Q800 608 830 608T864 634z"/><circle cx="798" cy="660" r="9"/><circle cx="866" cy="652" r="9"/>
                                <use href="#smile" x="927" y="418"/>
                                <text x="876" y="600" font-size="100" transform="rotate(8 876 600)">文</text><text x="964" y="632" font-size="96" transform="rotate(-5 964 632)">A</text>
                                <use href="#heart" transform="translate(174 344)"/><use href="#heart" transform="translate(648 632) scale(.95)"/><use href="#mic" transform="translate(692 694) scale(.7)"/>
                                <use href="#drop" x="36" y="340"/><use href="#drop" x="102" y="344"/><use href="#drop" x="72" y="388"/><use href="#star" x="411" y="34"/><use href="#star" x="464" y="244"/><use href="#star" x="66" y="558"/><use href="#star" x="156" y="722"/><use href="#spark" transform="translate(635 484) scale(.8)"/><use href="#spark" transform="translate(854 488) scale(.8)"/><use href="#bolt" x="4" y="610"/>
                                <circle cx="66" cy="752" r="50"/><circle cx="66" cy="752" r="38"/><circle cx="40" cy="702" r="19"/><circle cx="40" cy="702" r="8"/><path d="M58 760l8-26 8 26M194 682l28-2 2 28-28 4zM256 688l30-2-2 30-28-4zM226 700l32 6M206 712l4 24h24v30M240 716v24l26 4M298 756Q290 720 326 712L314 704 348 696 336 734 328 724Q306 732 312 756M360 726q20 12 18 40"/><circle cx="850" cy="752" r="45"/><path d="M838 734l30 14-30 14z"/><circle cx="984" cy="756" r="60"/><circle cx="984" cy="756" r="46"/><path d="M984 756v-44M984 756l-34-26M984 756l34-26M984 756l-46 0"/>
                                <circle cx="234" cy="20" r="11"/><circle cx="222" cy="53" r="9"/><circle cx="192" cy="52" r="8"/><circle cx="148" cy="73" r="9"/><circle cx="244" cy="91" r="8"/><circle cx="343" cy="35" r="8"/><circle cx="386" cy="71" r="9"/><circle cx="330" cy="66" r="7"/><circle cx="113" cy="184" r="9"/><circle cx="128" cy="236" r="7"/><circle cx="171" cy="240" r="9"/><circle cx="167" cy="276" r="13"/><circle cx="189" cy="301" r="9"/><circle cx="128" cy="311" r="8"/><circle cx="181" cy="397" r="10"/><circle cx="459" cy="301" r="12"/><circle cx="448" cy="339" r="13"/><circle cx="477" cy="356" r="8"/><circle cx="425" cy="364" r="7"/><circle cx="427" cy="393" r="7"/><circle cx="673" cy="29" r="12"/><circle cx="708" cy="28" r="8"/><circle cx="749" cy="31" r="11"/><circle cx="668" cy="72" r="8"/><circle cx="706" cy="183" r="8"/><circle cx="683" cy="200" r="8"/><circle cx="832" cy="212" r="10"/><circle cx="848" cy="183" r="7"/><circle cx="968" cy="263" r="10"/><circle cx="699" cy="362" r="9"/><circle cx="685" cy="402" r="13"/><circle cx="653" cy="415" r="9"/><circle cx="673" cy="454" r="6"/><circle cx="794" cy="380" r="10"/><circle cx="831" cy="401" r="13"/><circle cx="844" cy="446" r="8"/><circle cx="807" cy="455" r="8"/><circle cx="498" cy="457" r="11"/><circle cx="11" cy="539" r="11"/><circle cx="97" cy="671" r="12"/><circle cx="51" cy="644" r="9"/><circle cx="138" cy="677" r="8"/><circle cx="641" cy="550" r="8"/><circle cx="639" cy="574" r="8"/><circle cx="744" cy="732" r="15"/><circle cx="748" cy="694" r="9"/><circle cx="776" cy="724" r="9"/><circle cx="551" cy="682" r="8"/><circle cx="532" cy="702" r="6"/><circle cx="568" cy="705" r="8"/><circle cx="402" cy="740" r="10"/><circle cx="950" cy="675" r="8"/><circle cx="984" cy="662" r="11"/><circle cx="978" cy="124" r="13"/><circle cx="920" cy="678" r="7"/>
                            </g>
                            <g transform="translate(303 510) scale(.3333)">
                                <use href="#people" transform="translate(220 44) rotate(4) scale(.75)"/><circle cx="97" cy="56" r="11"/><path d="M90 28h14l2 12 12-4 8 14-8 8 6 12-10 8-10-2-4 10-16-2 0-10-14 0-2-14 6-8-6-10 10-10 10 2z"/>
                                <path d="M498 50Q526 36 528 10L540 0Q574-6 580 24L582 74zM530 66q6 16 18 4M560 12q12 10 8 30M614 44L640 30 700 32 770 10M616 56Q690 70 764 40M648 46l12 14 20-12 16 12 20-14"/>
                                <use href="#star" transform="translate(144 120) scale(1.2)"/><use href="#star" transform="translate(116 308) scale(1.5)"/><use href="#star" x="680" y="106"/><use href="#star" x="735" y="190"/><use href="#star" x="776" y="350"/><use href="#spark" transform="translate(402 78) rotate(45)"/><use href="#spark" x="328" y="430"/><use href="#spark" transform="translate(698 560) scale(.8)"/>
                                <!-- turtle -->
                                <ellipse cx="190" cy="218" rx="64" ry="50" transform="rotate(-28 190 218)"/><ellipse cx="190" cy="216" rx="36" ry="26" transform="rotate(-20 190 216)"/><path d="M184 168V150q6-8 12 0V166M236 180l20-24q16-8 16 10l-24 32M246 226l18 4q2 10-14 10M182 268v20q4 14 12 0l4-24M130 216l-20-8q0-14 26-8M176 192l-6-22M208 190l6-20M226 212l22 2M216 236l16 18M182 244l-6 22M160 230l-22 14M156 212l-22-6"/>
                                <path d="M302 144Q270 110 284 76Q306 90 304 126Q310 90 330 72Q340 94 324 116Q340 90 356 98Q354 134 304 138M304 100L300 160 320 196M308 160Q268 150 278 200Q290 236 320 236Q360 226 356 180Q344 144 308 160z"/>
                                <!-- ice lolly -->
                                <path d="M452 116Q464 108 500 112Q540 140 548 216Q546 232 440 252L430 160Q452 164 438 150Q462 136 452 116zM484 112Q520 150 534 230M484 250l8 26q10 12 16-2l-8-28M454 174l14 6-12 8M500 166l-14 8 14 4M468 206l30-6q4 20-12 22t-18-16"/>
                                <path d="M582 182Q620 180 640 168Q700 166 688 220Q652 230 658 290Q640 314 610 290Q590 264 564 260L578 230Q566 200 570 186z"/>
                                <!-- cupcake -->
                                <path d="M758 250L782 274 814 330 872 312 876 234Q870 210 846 206Q860 190 824 186Q804 166 790 166Q792 190 780 190Q760 200 774 216Q752 230 758 250zM758 250Q756 284 782 274Q840 260 874 242M770 232Q810 240 850 206M776 206Q800 216 826 186"/>
                                <path d="M262 260L398 236Q412 236 416 250L440 330Q440 340 424 350L430 388 384 372 294 394Q280 390 278 372L258 282Q256 266 262 260z"/><circle cx="334" cy="316" r="41"/><circle cx="346" cy="306" r="12"/><path d="M308 318q8-10 18-2M316 336l44-12q4 24-14 28t-30-16M392 344l6 8 10-22M406 348l12-20"/>
                                <!-- cat -->
                                <path d="M500 380L492 350 516 352 580 336 600 326 614 346Q634 390 610 420Q580 440 540 436Q504 420 500 380zM620 392Q680 394 676 350L660 340Q676 334 684 370Q674 400 684 430Q700 480 670 480Q640 486 644 460Q620 450 634 484L670 482M544 440L564 480Q556 500 580 506Q600 490 592 490L610 496 608 456 650 460M552 386l14 0 4 10 10-8M524 406l8 0"/><circle cx="536" cy="380" r="9"/><circle cx="580" cy="368" r="9"/>
                                <rect x="108" y="370" width="144" height="114" rx="14"/><path d="M134 486V510L162 484"/><text x="132" y="448" font-size="72">Hi</text>
                                <!-- ok hand -->
                                <path d="M370 556L350 480Q350 450 366 456Q380 500 396 506Q424 490 402 464Q376 450 374 436Q430 440 442 490Q430 410 450 406Q462 420 458 480Q474 420 490 424Q496 440 472 480L506 458Q516 466 430 556M358 560Q400 552 432 564V588Q410 602 356 592z"/>
                                <path transform="translate(244 548)" d="M-4 0C-60-6-50-40-22-30C-40-62 44-70 22-30C60-40 64 0 10 4C50 10 40 44 20 40C22 70-10 70-4 10C-4 20-30 40-46 56C-56 50-20 20-4 0z"/>
                                <!-- gamepad -->
                                <path d="M434 640Q440 620 490 540Q510 510 550 530Q570 560 600 556Q660 550 668 590L652 710Q630 740 596 690Q580 650 520 650Q490 670 450 660Q430 650 434 640z"/><use href="#plus" x="524" y="568"/><circle cx="525" cy="618" r="16"/><circle cx="590" cy="640" r="16"/><circle cx="608" cy="592" r="7"/><circle cx="630" cy="582" r="7"/><circle cx="616" cy="614" r="7"/><circle cx="639" cy="605" r="7"/><path d="M564 604l10-28 8 2-10 28z"/>
                                <path d="M208 676Q210 662 360 630Q374 630 378 642L390 690Q390 700 380 702L236 744Q220 748 216 730zM244 752L374 712V722L260 756M334 630l14-4M492 690Q500 662 526 662Q554 680 548 704L530 700Q534 684 514 680Q500 690 520 706 506 716 492 690zM462 714Q500 710 538 746Q500 740 462 714zM462 714L444 756M660 756Q700 700 722 704Q740 730 734 756"/>
                                <text x="228" y="724" font-size="56" transform="rotate(-13 228 724)">09:28</text>
                                <path d="M170 640l20 14M164 660l30 4M164 688l28-6M728 396L832 388 826 464 738 468zM750 414l56-6M750 428l44-4M750 442l50-4"/>
                                <circle cx="804" cy="96" r="40"/><path d="M788 70l34 28-14 2 10 16-10 6-8-16-8 8z"/>
                                <use href="#mic" transform="translate(784 610) scale(1.05)"/><use href="#drop" transform="translate(460 292) scale(.7)"/><use href="#drop" transform="translate(542 292) scale(.8)"/><use href="#drop" transform="translate(586 300) scale(.7)"/>
                                <use href="#heart" transform="translate(880 418) rotate(14)"/>
                                <circle cx="69" cy="124" r="13"/><circle cx="97" cy="117" r="8"/><circle cx="221" cy="127" r="9"/><circle cx="90" cy="148" r="8"/><circle cx="58" cy="263" r="10"/><circle cx="235" cy="309" r="8"/><circle cx="247" cy="344" r="11"/><circle cx="185" cy="329" r="8"/><circle cx="402" cy="213" r="11"/><circle cx="426" cy="135" r="8"/><circle cx="380" cy="138" r="8"/><circle cx="545" cy="109" r="11"/><circle cx="582" cy="111" r="15"/><circle cx="624" cy="101" r="9"/><circle cx="599" cy="147" r="7"/><circle cx="740" cy="112" r="14"/><circle cx="718" cy="147" r="8"/><circle cx="799" cy="27" r="13"/><circle cx="868" cy="62" r="10"/><circle cx="714" cy="248" r="9"/><circle cx="726" cy="292" r="14"/><circle cx="736" cy="322" r="7"/><circle cx="688" cy="293" r="7"/><circle cx="853" cy="358" r="13"/><circle cx="88" cy="475" r="12"/><circle cx="323" cy="513" r="14"/><circle cx="296" cy="480" r="8"/><circle cx="369" cy="403" r="7"/><circle cx="397" cy="404" r="8"/><circle cx="646" cy="525" r="13"/><circle cx="612" cy="536" r="8"/><circle cx="719" cy="507" r="10"/><circle cx="744" cy="499" r="8"/><circle cx="795" cy="513" r="12"/><circle cx="835" cy="497" r="14"/><circle cx="770" cy="493" r="7"/><circle cx="750" cy="542" r="9"/><circle cx="832" cy="569" r="9"/><circle cx="148" cy="589" r="13"/><circle cx="134" cy="557" r="8"/><circle cx="302" cy="609" r="12"/><circle cx="180" cy="523" r="8"/><circle cx="399" cy="629" r="10"/><circle cx="691" cy="651" r="10"/><circle cx="718" cy="660" r="7"/><circle cx="762" cy="722" r="11"/><circle cx="835" cy="681" r="10"/><circle cx="405" cy="707" r="8"/><circle cx="436" cy="706" r="8"/><circle cx="829" cy="722" r="8"/><circle cx="75" cy="661" r="11"/><circle cx="40" cy="674" r="9"/><circle cx="118" cy="655" r="8"/><circle cx="459" cy="58" r="10"/>
                            </g>
                        </g>
                    </defs>
                    <use href="#doodle" x="-594"/>
                    <use href="#doodle"/>
                    <use href="#doodle" x="594"/>
                    <use href="#doodle" x="1188"/>
                </svg>
                <div class="msg out m1"><div class="quote"></div><p dir="rtl">حضرتك في الجروب المكتب الفني تمام</p><time>10:44 am <svg><use href="#ticks"/></svg></time></div>
                <div class="msg out m2"><p dir="rtl">والمدني برسل لحضرتك اللينك</p><time>10:44 am <svg><use href="#ticks"/></svg></time></div>
                <div class="msg in m3 tail"><p dir="rtl">اسمه ايه</p><time>10:45 am</time></div>
                <div class="msg out m4 tail">
                    <div class="quote"><strong>Eng Wael Abroad</strong><p dir="rtl">اسمه ايه</p></div>
                    <div class="line"><a>https://chat.whatsapp.com/HKlCDcCjR463GdyXwVyeP5</a><time>10:47 am <svg><use href="#ticks"/></svg></time></div>
                </div>
                <div class="msg in m5 tail"><p dir="rtl">دورة المكتب الفنى اسمه ايه</p><time>10:50 am</time></div>
                <div class="msg in m6"><p dir="rtl">جروب</p><time>10:50 am</time></div>
                <div class="msg out m7 tail"><div class="line"><span>technical office</span><time>10:51 am <svg><use href="#ticks"/></svg></time></div></div>
                <div class="msg out m8"><p dir="rtl">مساء الخير يا فندم حضرتك متاح حاليا للتواصل مع مهندس it ؟</p><time>12:01 pm <svg><use href="#ticks"/></svg></time></div>
                <div class="msg in m9 tail"><p dir="rtl">اه</p><time>12:03 pm</time></div>
                <div class="msg out m10 tail"><p dir="rtl">تمام</p><time>12:04 pm <svg><use href="#ticks"/></svg></time></div>
                <div class="msg out m11"><p dir="rtl">هضيف حضرتك في الجروب للتواصل مع المهندس</p><time>12:12 pm <svg><use href="#ticks"/></svg></time></div>
                <div class="scroll"><div></div></div>
            </section>
            <footer class="composer">
                <svg class="emoji" width="28" height="28" viewBox="0 0 28 28"><circle cx="14" cy="14" r="12.400" fill="none" stroke="#54656f" stroke-width="2"/><g fill="#54656f"><ellipse cx="9.600" cy="11" rx="1.700" ry="2.200"/><ellipse cx="18.400" cy="11" rx="1.700" ry="2.200"/><path d="M6.300 15.500q7.700 1.600 15.400 0-1.200 6-7.700 6t-7.700-6z"/></g><path d="M8.800 18q5.200.9 10.400 0" stroke="#f0f2f5" stroke-width="1.300"/></svg>
                <svg class="clip" width="24" height="22" viewBox="0 0 24 22"><path d="M17 8.500l-7 6.800q-1.600 1.300-2.900 0t0-2.900l7.800-7.700q2.700-2.200 5 0t0 5l-9 8.700q-4 3-7.300 0t0-7.200l8-8q.9-1 2.200-1.500" transform="translate(0 .5)" fill="none" stroke="#54656f" stroke-width="1.800" stroke-linecap="round"/></svg>
                <div class="field">Type a message<i></i></div>
                <svg class="voice" width="20" height="26" viewBox="0 0 20 26"><rect x="6" y="1" width="8" height="15.500" rx="4" fill="#54656f"/><path d="M1.700 12.500q.6 7 8.300 7t8.300-7M10 19v6" fill="none" stroke="#54656f" stroke-width="2.300"/></svg>
            </footer>
        </main>
    </div>
    <div class="taskbar"></div>
</body>
</html>
```
FILE: styles.css
```
*{
    box-sizing: border-box;
    margin: 0;
    padding: 0;
}
ul{
    list-style: none;
}
html,body{
    height: 911px;
    overflow: hidden;
}
body{
    font-family: "Open Sans", "Noto Sans", "DejaVu Sans", sans-serif;
    color: #111b21;
    background: linear-gradient(#00a884 113px, transparent 113px), linear-gradient(#e5e2de 113px, #d0d6d9 911px);
}
.defs{
    position: absolute;
}
.app{
    display: flex;
    width: 1268px;
    height: 889px;
    box-shadow: 0 6px 18px rgba(11,20,26,.08);
}

/* chat list */
.side{
    position: relative;
    width: 37px;
    background: #fff;
    border-right: 1px solid #dfe3e6;
    overflow: hidden;
}
.side-head{
    height: 59px;
    background: #f0f2f5;
}
.side-search{
    height: 54px;
    padding: 21px 0 0 4px;
    border-bottom: 1px solid #e9edef;
    box-shadow: 0 1px 2px rgba(11,20,26,.06);
}
.side-search svg{
    display: block;
}
.list{
    width: 30px;
    margin-top: -21px;
}
.list li{
    display: flex;
    flex-direction: column;
    align-items: flex-end;
    height: 79.200px;
    padding: 20px 17px 0 0;
    border-bottom: 1px solid #e9edef;
    font-size: 12.500px;
    line-height: 20px;
    color: #667781;
}
.list .unread{
    padding-top: 19px;
    color: #1fa855;
}
.list b{
    width: 22px;
    height: 22px;
    margin: 2px -1px 0 0;
    border-radius: 11px;
    background: #25d366;
    color: #fff;
    font-size: 12px;
    line-height: 22px;
    text-align: center;
}
.list i{
    width: 40px;
    height: 21px;
    margin: 2px -1px 0 0;
    padding-right: 7px;
    border-radius: 3px;
    background: #e9edef;
    font-size: 12px;
    font-style: normal;
    text-align: right;
}
.side-thumb{
    position: absolute;
    top: 130px;
    right: 0;
    width: 6px;
    height: 139px;
    background: #ced0d1;
}

.chat{
    width: 1231px;
}
.chat-head{
    display: flex;
    align-items: center;
    height: 60px;
    padding: 0 37px 7px 18px;
    background: #f0f2f5;
    border-bottom: 1px solid #e3e6ea;
}
.chat-head h1{
    flex: 1;
    margin-left: 16px;
    font-size: 17.400px;
    font-weight: 400;
    letter-spacing: -.2px;
}
.more{
    margin: 1px 0 0 41px;
}

/* messages */
.messages{
    position: relative;
    display: flex;
    flex-direction: column;
    justify-content: flex-end;
    height: 761px;
    padding: 0 75px 22px 69px;
    background: #7acba5;
    overflow: hidden;
}
.wallpaper{
    position: absolute;
    top: 0;
    left: 0;
    font-family: "Open Sans", "Noto Sans CJK SC", sans-serif;
    font-weight: 600;
}
.msg{
    position: relative;
    flex: none;
    display: flex;
    flex-direction: column;
    height: 57px;
    margin-top: 2px;
    padding: 5px 8px 2px;
    border-radius: 8px;
    box-shadow: 0 1px 1px rgba(11,20,26,.15);
    white-space: nowrap;
}
.msg p{
    height: 24px;
    font-size: 15.350px;
    line-height: 24px;
}
.msg time{
    display: flex;
    align-items: center;
    justify-content: flex-end;
    gap: 4px;
    margin-top: auto;
    font-size: 11.800px;
    line-height: 18px;
    letter-spacing: -.25px;
    color: #667781;
}
.msg time svg{
    width: 18px;
    height: 12px;
}
.in{
    align-self: flex-start;
    background: #fff;
}
.out{
    align-self: flex-end;
    background: #d9fdd3;
}
.tail{
    margin-top: 13px;
}
.tail::before{
    content: "";
    position: absolute;
    top: 0;
    width: 10px;
    height: 12px;
    background: inherit;
}
.in.tail{
    border-top-left-radius: 0;
}
.out.tail{
    border-top-right-radius: 0;
}
.in.tail::before{
    left: -7px;
    clip-path: polygon(0 0, 100% 0, 100% 100%, 7px 100%, 0 2px);
}
.out.tail::before{
    right: -8px;
    clip-path: polygon(0 0, 100% 0, 9px 3px, 2px 100%, 0 100%);
}
.quote{
    height: 62px;
    border-left: 4px solid #06cf9c;
    border-radius: 6px;
    background: #d1f4cc;
}
.m1{
    width: 311px;
    height: 99px;
}
.m1 .quote{
    flex: none;
    height: 36px;
    margin-bottom: 5px;
}
.m2{
    width: 207px;
}
.m3{
    width: 75px;
    height: 58px;
}
.m4{
    width: 476px;
    height: 99px;
    padding: 3px 4px 0;
}
.m4 .quote{
    height: 60px;
    padding: 8px 13px 0 9px;
    color: #667781;
}
.m4 strong{
    display: block;
    font-size: 13.600px;
    font-weight: 600;
    line-height: 19px;
    letter-spacing: -.1px;
    color: #06cf9c;
}
.m4 .quote p{
    margin-top: 2px;
    font-size: 14px;
}
.line{
    display: flex;
    justify-content: space-between;
    font-size: 15.400px;
    line-height: 22px;
    letter-spacing: -.24px;
}
.line time{
    margin-top: 10px;
}
.m4 .line{
    padding: 5px 4px 0 6px;
    letter-spacing: -.29px;
}
.m4 a{
    color: #027eb5;
}
.m4 time{
    margin-top: 11px;
}
.m5{
    width: 195px;
}
.m6{
    width: 75px;
    height: 58px;
}
.m7{
    width: 200px;
    height: 36px;
    padding-left: 10px;
}
.m8{
    width: 405px;
}
.m9{
    width: 76px;
    margin-top: 14px;
}
.m10{
    width: 97px;
}
.m11{
    width: 333px;
}
.m11 p{
    font-size: 15.650px;
}
.scroll{
    position: absolute;
    top: 0;
    right: 0;
    width: 6px;
    height: 760px;
    padding-top: 431px;
    background: rgba(255,255,255,.1);
}
.scroll div{
    height: 329px;
    background: rgba(70,80,90,.32);
}

/* input row */
.composer{
    display: flex;
    align-items: center;
    height: 68px;
    padding: 0 29px 0 26px;
    background: #f0f2f5;
}
.composer svg{
    flex: none;
}
.clip{
    margin-left: 20px;
}
.field{
    flex: none;
    display: flex;
    align-items: center;
    justify-content: space-between;
    width: 1044px;
    height: 46px;
    margin: 0 21px 0 19px;
    padding: 2px 19px 0 18px;
    border-radius: 9px;
    background: #fff;
    font-size: 16px;
    letter-spacing: -.25px;
    color: #667781;
}
.field i{
    width: 8px;
    height: 8px;
    margin-top: 6px;
    border-radius: 50%;
    background: #008069;
}
.taskbar{
    height: 1px;
    margin-top: 21px;
    background: linear-gradient(90deg, #c07030 15px, #26343b 15px);
}
```
